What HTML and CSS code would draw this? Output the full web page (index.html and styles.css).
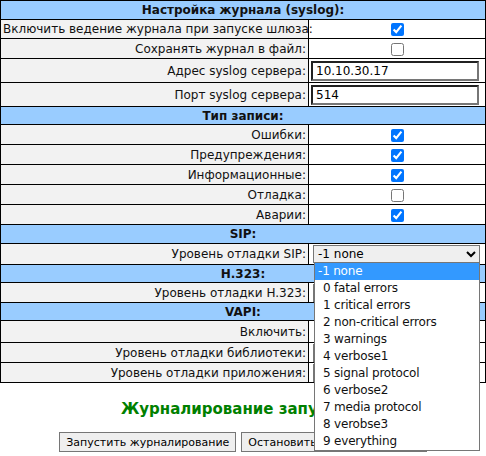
FILE: index.html
```html
<!DOCTYPE html>
<html lang="ru">
<head>
<meta charset="utf-8">
<title>Журнал</title>
<link rel="stylesheet" href="styles.css">
</head>
<body>
<div class="page">
<table class="cfg">
<colgroup><col class="c-lbl"><col class="c-val"></colgroup>
<tr class="hdr first"><th colspan="2">Настройка журнала (syslog):</th></tr>
<tr class="short"><td class="lbl">Включить ведение журнала при запуске шлюза:</td><td class="val"><input type="checkbox" checked></td></tr>
<tr><td class="lbl">Сохранять журнал в файл:</td><td class="val"><input type="checkbox"></td></tr>
<tr class="inrow"><td class="lbl">Адрес syslog сервера:</td><td class="val left"><input class="txt" type="text" value="10.10.30.17"></td></tr>
<tr class="inrow"><td class="lbl">Порт syslog сервера:</td><td class="val left"><input class="txt" type="text" value="514"></td></tr>
<tr class="hdr"><th colspan="2">Тип записи:</th></tr>
<tr><td class="lbl">Ошибки:</td><td class="val"><input type="checkbox" checked></td></tr>
<tr><td class="lbl">Предупреждения:</td><td class="val"><input type="checkbox" checked></td></tr>
<tr><td class="lbl">Информационные:</td><td class="val"><input type="checkbox" checked></td></tr>
<tr><td class="lbl">Отладка:</td><td class="val"><input type="checkbox"></td></tr>
<tr><td class="lbl">Аварии:</td><td class="val"><input type="checkbox" checked></td></tr>
<tr class="hdr first"><th colspan="2">SIP:</th></tr>
<tr class="selrow"><td class="lbl">Уровень отладки SIP:</td><td class="val left"><select class="sel"><option>-1 none</option></select></td></tr>
<tr class="hdr"><th colspan="2">H.323:</th></tr>
<tr><td class="lbl">Уровень отладки H.323:</td><td class="val left"><select class="sel"><option>-1 none</option></select></td></tr>
<tr class="hdr"><th colspan="2">VAPI:</th></tr>
<tr class="tall"><td class="lbl">Включить:</td><td class="val"><input type="checkbox" checked></td></tr>
<tr><td class="lbl">Уровень отладки библиотеки:</td><td class="val left"><select class="sel"><option>-1 none</option></select></td></tr>
<tr><td class="lbl">Уровень отладки приложения:</td><td class="val left"><select class="sel"><option>-1 none</option></select></td></tr>
</table>

<h2 class="status">Журналирование запущено</h2>
<div class="buttons">
  <button class="btn" type="button">Запустить журналирование</button>
  <button class="btn" type="button">Остановить журналирование</button>
</div>

<div class="dropdown">
  <div class="opt active">-1 none</div>
  <div class="opt">0 fatal errors</div>
  <div class="opt">1 critical errors</div>
  <div class="opt">2 non-critical errors</div>
  <div class="opt">3 warnings</div>
  <div class="opt">4 verbose1</div>
  <div class="opt">5 signal protocol</div>
  <div class="opt">6 verbose2</div>
  <div class="opt">7 media protocol</div>
  <div class="opt">8 verobse3</div>
  <div class="opt">9 everything</div>
</div>
</div>
</body>
</html>
```

FILE: styles.css
```css
html, body {
  margin: 0;
  padding: 0;
  background: #ffffff;
}
body {
  font-family: "DejaVu Sans", Verdana, sans-serif;
  font-size: 12px;
  color: #111;
}
.page {
  position: relative;
  width: 486px;
  height: 456px;
}
.cfg {
  width: 486px;
  border-collapse: collapse;
  table-layout: fixed;
  border: 1px solid #000;
}
.c-lbl { width: 308px; }
.cfg th, .cfg td {
  border: 1px solid #000;
  padding: 0 2px;
  height: 19px;
}
.cfg .hdr th {
  background: #99ccff;
  font-weight: bold;
  text-align: center;
  height: 17px;
  padding: 0;
}
.cfg .hdr.first th { height: 18px; }
.lbl {
  background: #f2f2f2;
  text-align: right;
  white-space: nowrap;
}
.val {
  background: #fff;
  text-align: center;
}
.val.left { text-align: left; }
.val input[type="checkbox"] {
  margin: 0;
  width: 13px;
  height: 13px;
  vertical-align: middle;
}
.cfg .short td { height: 18px; }
.cfg .inrow td { height: 23px; }
.cfg .selrow td { height: 20px; }
.cfg .tall td { height: 21px; }
.txt {
  box-sizing: border-box;
  width: 168px;
  height: 20px;
  border: 2px inset #767676;
  font: inherit;
  font-size: 12px;
  padding: 0 3px;
  margin: 0;
  vertical-align: middle;
}
.sel {
  box-sizing: border-box;
  width: 167px;
  height: 18px;
  font: inherit;
  font-size: 12px;
  margin: 0 0 0 2px;
  border: 1px solid #767676;
  vertical-align: middle;
}
.status {
  color: #008000;
  font-size: 15px;
  font-weight: bold;
  text-align: center;
  margin: 17px 0 14px;
  line-height: 18px;
}
.buttons {
  display: flex;
  justify-content: center;
  gap: 5px;
}
.btn {
  font: inherit;
  font-size: 11px;
  background: #efefef;
  border: 1px solid #767676;
  padding: 1px 6px;
  height: 20px;
  color: #000;
}
.dropdown {
  position: absolute;
  left: 314px;
  top: 262px;
  width: 166px;
  background: #fff;
  border: 1px solid #767676;
  box-sizing: border-box;
  z-index: 5;
}
.opt {
  height: 17px;
  line-height: 17px;
  padding-left: 8px;
  font-size: 12px;
  letter-spacing: -0.2px;
  white-space: nowrap;
}
.opt.active {
  background: #3399ff;
  color: #fff;
  padding-left: 3px;
}
```
